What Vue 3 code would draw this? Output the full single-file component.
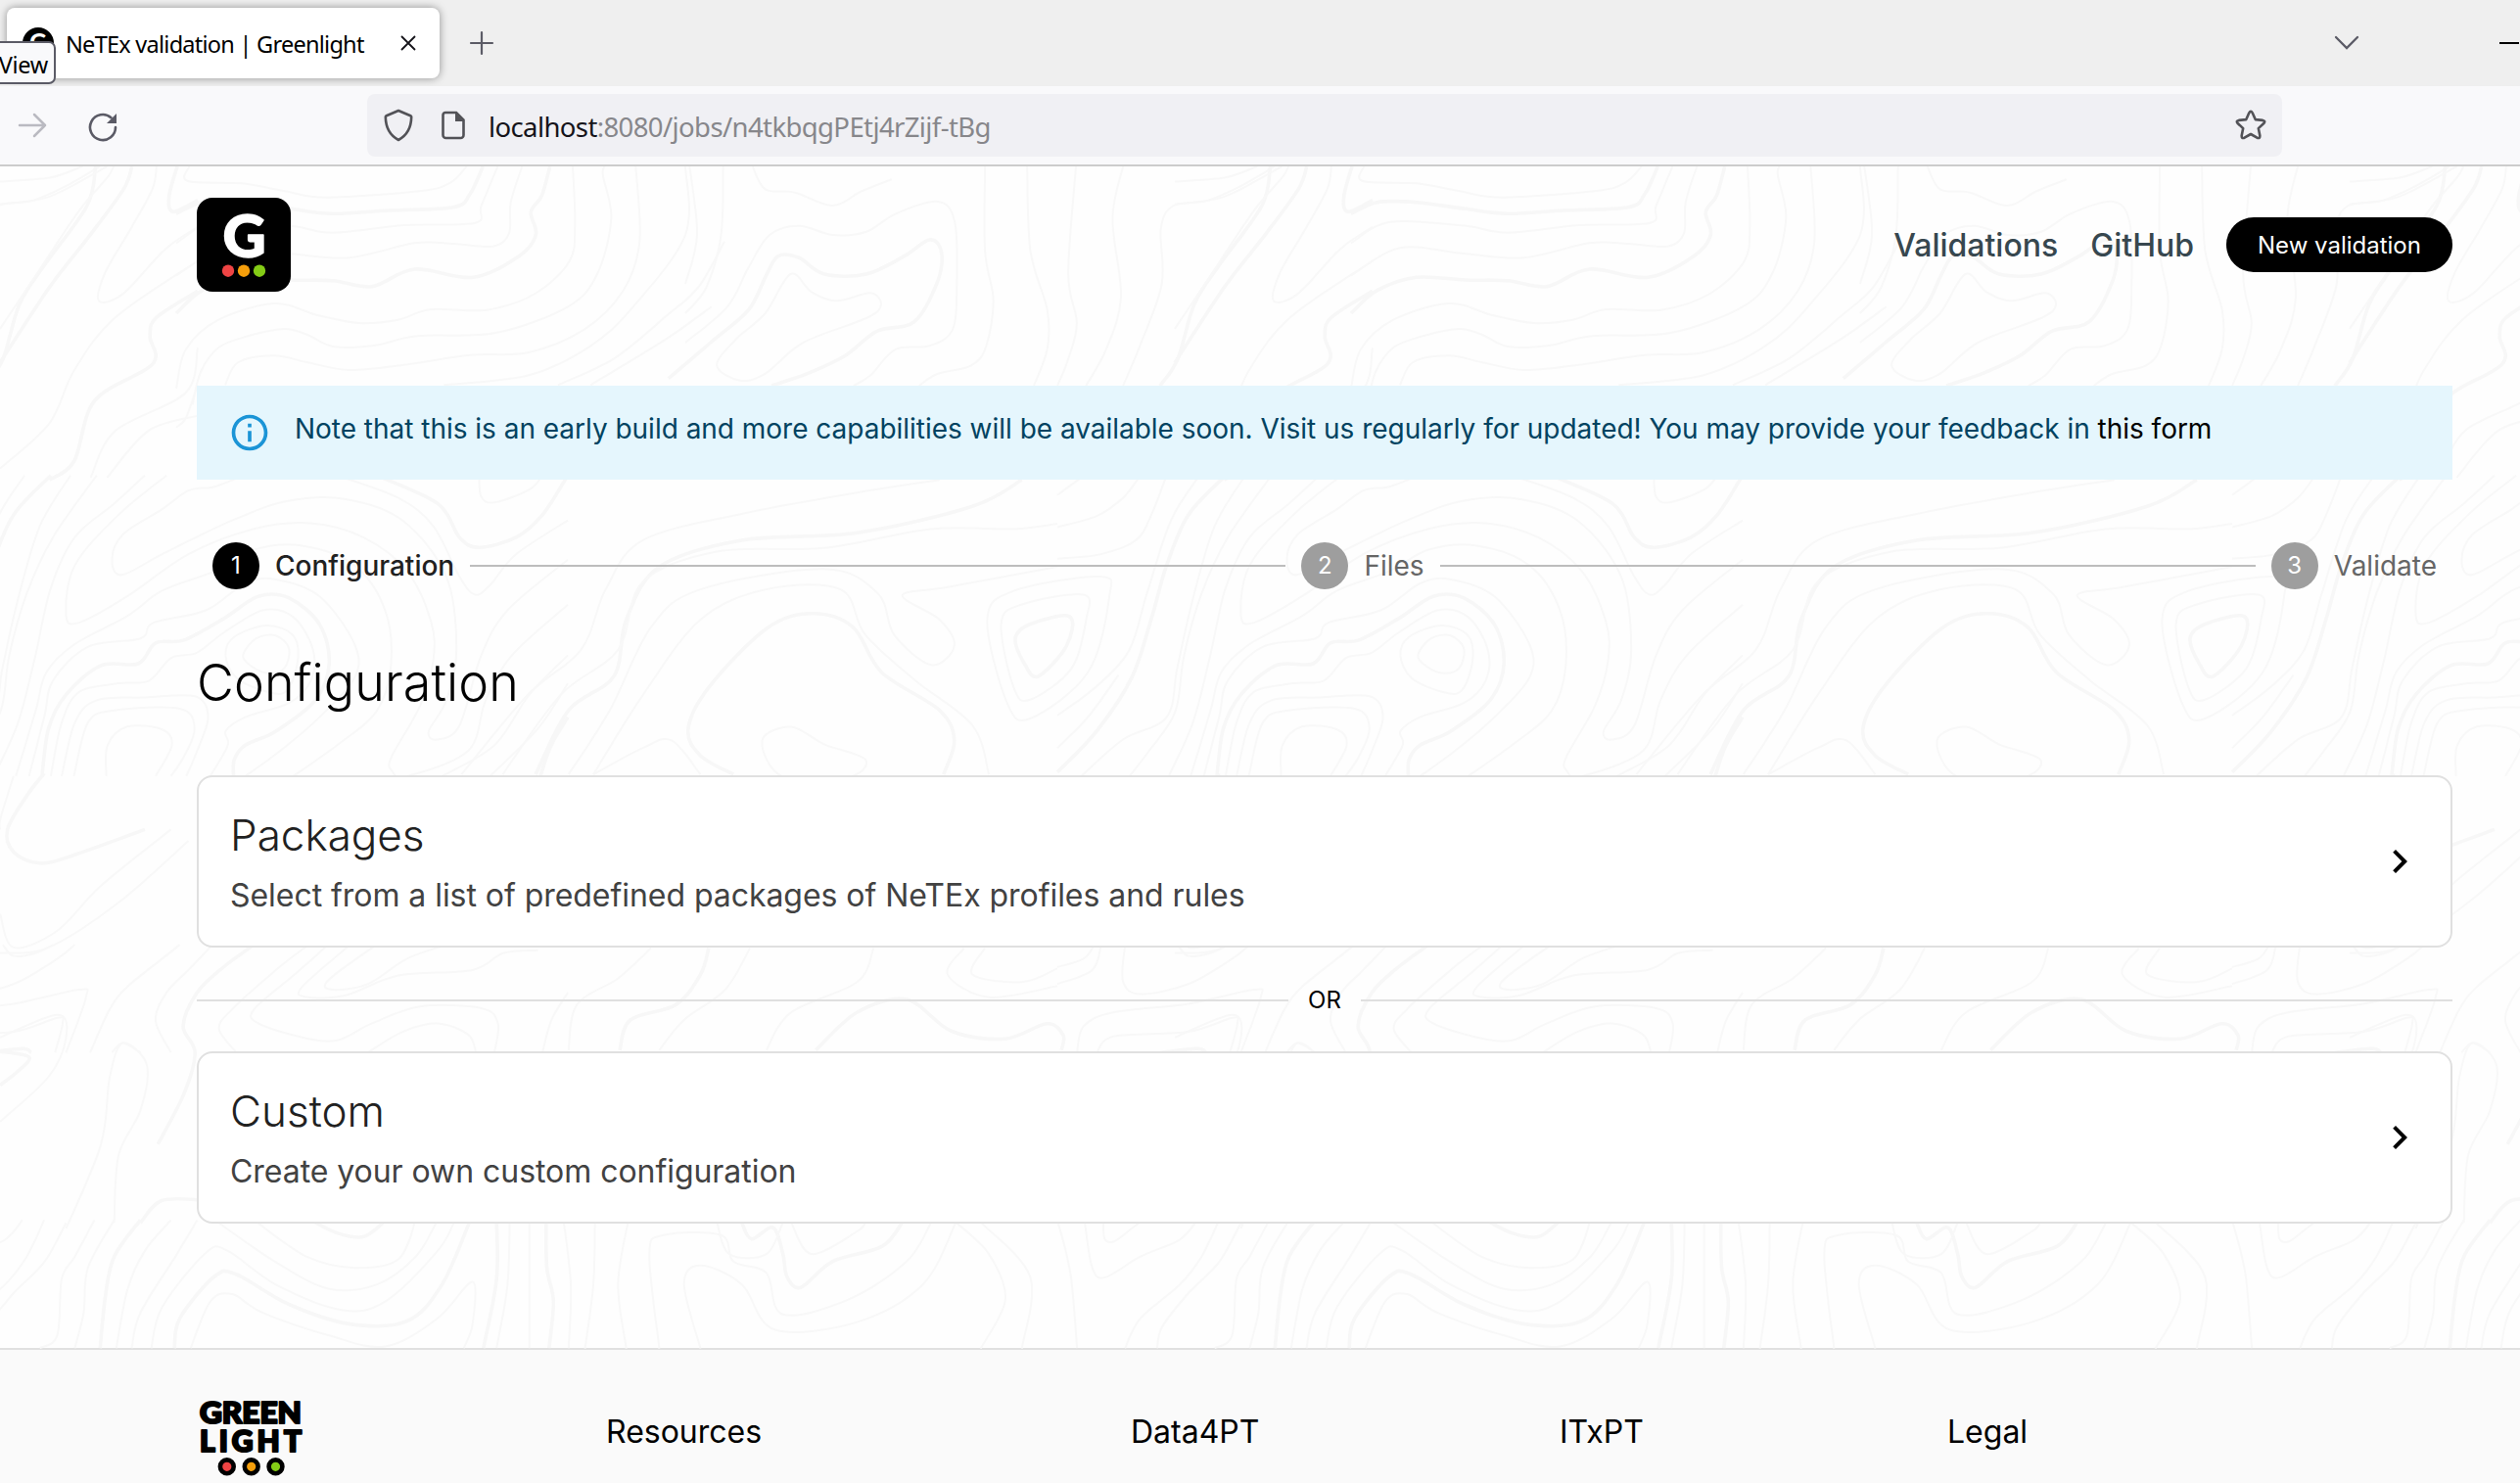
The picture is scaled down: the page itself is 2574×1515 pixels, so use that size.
<script setup>
// Contour sheets: each has an origin and scale, and polylines that are smoothed into curves.
// The leading digit is the kind: 0 plain, 1 bold index contour, 2 closed ring, 3 closed bold ring.
const sheets = [
  {
    ox: 0, oy: 0, sx: 1.188, sy: 1.296,
    lines: [
      [0, 0, 20, 60, 15, 100, 0],
      [0, 0, 50, 60, 40, 130, 0],
      [1, 0, 260, 60, 160, 110, 90, 150, 30, 160, 0],
      [0, 0, 215, 40, 150, 95, 60, 130, 15, 138, 0],
      [0, 240, 80, 200, 110, 150, 168, 120, 178, 128, 140, 160, 80, 185, 30, 190, 0],
      [0, 0, 400, 60, 340, 90, 270, 140, 200, 240, 125],
      [1, 240, 165, 190, 200, 182, 225, 185, 262, 115, 310, 90, 390, 60, 415],
      [0, 240, 330, 180, 350, 130, 412],
      [0, 240, 240, 225, 300, 140, 350, 110, 412],
      [1, 240, 45, 210, 60, 205, 40, 215, 0],
      [1, 650, 805, 690, 720, 745, 675, 760, 600, 800, 530, 900, 495, 1040, 485, 1180, 450, 1240, 415],
      [0, 560, 805, 640, 700, 705, 640, 735, 560, 780, 495, 900, 460, 1050, 430, 1140, 415],
      [0, 690, 805, 740, 720, 790, 610, 850, 560, 1000, 533, 1065, 565, 1085, 620, 1130, 660, 1158, 635, 1140, 600, 1095, 568, 1150, 557, 1283, 530],
      [0, 610, 805, 680, 700, 750, 640, 780, 550, 870, 510, 1000, 505, 1130, 480, 1230, 480, 1283, 473],
      [0, 720, 805, 780, 700, 850, 600, 930, 560, 1020, 560, 1050, 620, 1110, 680, 1180, 740, 1200, 805],
      [1, 890, 805, 850, 780, 835, 745, 860, 690, 930, 612, 985, 592, 1035, 610, 1070, 670, 1140, 720, 1158, 760, 1145, 805],
      [0, 720, 805, 780, 770, 815, 760, 850, 805],
      [2, 925, 760, 960, 742, 1000, 765, 1050, 785, 1030, 808, 950, 808],
      [3, 1232, 625, 1250, 606, 1298, 596, 1294, 635, 1260, 675, 1244, 660],
      [2, 1215, 605, 1240, 580, 1315, 567, 1318, 600, 1300, 665, 1250, 706, 1230, 690],
      [2, 1198, 600, 1230, 562, 1335, 543, 1346, 570, 1320, 670, 1250, 731, 1222, 710],
      [0, 690, 1170, 700, 1110, 750, 1075, 790, 1035],
      [1, 752, 1170, 765, 1130, 820, 1110, 850, 1070, 860, 1035],
      [0, 800, 1170, 830, 1130, 880, 1090, 910, 1035],
      [0, 930, 1170, 960, 1120, 1040, 1080, 1060, 1035],
      [1, 990, 1170, 1040, 1120, 1100, 1103, 1155, 1145, 1220, 1155, 1270, 1135, 1290, 1150, 1288, 1170],
      [0, 1170, 1035, 1150, 1070, 1200, 1100, 1283, 1085],
      [0, 1195, 1035, 1180, 1070, 1240, 1080, 1283, 1062],
      [0, 710, 1565, 720, 1480, 722, 1398],
      [0, 760, 1565, 750, 1480, 762, 1398],
      [0, 800, 1565, 788, 1440, 805, 1415, 875, 1415, 890, 1450, 930, 1465, 950, 1520, 1030, 1500, 1100, 1450, 1130, 1398],
      [0, 850, 1565, 830, 1480, 850, 1455, 900, 1480, 940, 1540, 1040, 1530, 1120, 1480, 1160, 1398],
      [1, 900, 1398, 912, 1420, 938, 1405, 950, 1440, 955, 1470, 972, 1484, 1010, 1450, 1070, 1430, 1095, 1398],
      [0, 870, 1398, 885, 1440, 930, 1440, 950, 1398],
      [0, 960, 1398, 985, 1440, 1040, 1410, 1050, 1398],
      [0, 1240, 1565, 1250, 1470, 1190, 1398],
      [0, 1190, 1565, 1220, 1500, 1200, 1440, 1160, 1398],
    ],
  },
  {
    ox: -120, oy: 310, sx: 2.24, sy: 1.742,
    lines: [
      [0, 0, 45, 70, 5],
      [0, 0, 102, 90, 82, 150, 50, 190, 10],
      [0, 0, 158, 100, 150, 180, 125, 215, 80, 250, 10],
      [0, 0, 437, 90, 385, 165, 320, 205, 220, 260, 90, 325, 10],
      [1, 0, 538, 90, 465, 170, 370, 215, 265, 250, 170, 300, 80, 385, 10],
      [0, 0, 495, 70, 440, 140, 365],
      [0, 55, 545, 150, 480, 250, 440, 275, 350, 310, 230, 360, 100, 430, 10],
      [0, 165, 545, 210, 500, 270, 430, 290, 330, 330, 220, 390, 120, 490, 10],
      [0, 255, 545, 310, 450, 350, 330, 385, 210, 440, 120, 530, 60, 600, 10],
      [0, 820, 12, 760, 30, 700, 37, 640, 70, 550, 115, 525, 160, 548, 187, 640, 150, 800, 90, 930, 55, 1060, 52, 1190, 90, 1290, 190, 1313, 320, 1290, 410, 1250, 465, 1268, 480, 1320, 455, 1370, 330, 1430, 250, 1568, 160],
      [0, 650, 10, 540, 80, 440, 170, 420, 258, 450, 272, 560, 225, 700, 150, 850, 105, 980, 95, 1100, 120, 1200, 180, 1255, 270, 1260, 340, 1230, 420, 1165, 510, 1165, 535, 1200, 545, 1340, 500, 1380, 410, 1440, 330, 1568, 240],
      [0, 305, 545, 350, 430, 375, 360, 440, 310, 560, 260, 640, 215, 760, 180, 850, 142, 960, 135, 1080, 170, 1150, 250, 1163, 350, 1130, 430, 1040, 490, 940, 545],
      [0, 335, 545, 370, 440, 390, 375, 470, 315, 590, 300, 620, 272, 740, 250, 830, 202, 900, 195, 1000, 225, 1080, 310, 1080, 370, 1000, 440, 910, 500, 830, 545],
      [1, 365, 545, 380, 460, 420, 400, 500, 348, 585, 345, 625, 308, 690, 303, 780, 265, 860, 225, 930, 228, 1000, 275, 1022, 345, 990, 410, 900, 465, 830, 490, 805, 515, 803, 545],
      [0, 385, 545, 410, 450, 450, 395, 540, 380, 610, 375, 660, 335, 720, 325, 780, 290, 870, 250, 940, 262, 985, 320, 980, 375, 930, 415, 830, 440, 785, 465, 790, 490, 750, 545],
      [2, 785, 330, 805, 297, 880, 277, 940, 295, 950, 340, 925, 393, 880, 395, 810, 370],
      [2, 825, 330, 855, 300, 900, 295, 930, 318, 920, 352, 885, 362, 845, 350],
      [0, 410, 545, 440, 450, 490, 410, 600, 405, 715, 403, 745, 440, 720, 500, 695, 545],
      [0, 438, 545, 470, 450, 530, 428, 680, 425, 714, 460, 690, 510, 660, 545],
      [0, 512, 545, 515, 490, 560, 457, 640, 462, 662, 490, 625, 545],
      [1, 1130, 10, 1270, 60, 1320, 120, 1365, 138, 1450, 120, 1510, 80, 1568, 10],
      [0, 1040, 10, 1180, 50, 1260, 100, 1320, 190, 1355, 222, 1390, 205, 1450, 150, 1568, 90],
      [0, 1365, 10, 1370, 48, 1400, 58, 1480, 35, 1510, 10],
      [1, 1505, 545, 1530, 490, 1568, 440],
      [0, 1280, 545, 1400, 490, 1480, 400, 1568, 330],
      [0, 1390, 545, 1500, 460, 1568, 380],
      [0, 0, 885, 60, 870, 85, 845],
      [0, 0, 915, 80, 890, 100, 845],
      [0, 155, 845, 150, 910, 190, 933, 300, 915, 400, 870, 440, 845],
      [0, 275, 845, 300, 865, 350, 860, 390, 845],
      [0, 45, 1037, 60, 990, 130, 965, 300, 950, 450, 925, 465, 940, 420, 1037],
      [0, 90, 1037, 130, 1008, 300, 1000, 400, 975, 412, 985, 395, 1037],
      [1, 235, 1037, 320, 1030, 340, 1037],
      [0, 475, 1037, 520, 960, 560, 920, 640, 870, 680, 845],
      [0, 525, 1037, 550, 1020, 590, 1037],
      [0, 660, 1037, 625, 980, 650, 930, 700, 890, 755, 845],
      [1, 630, 1200, 690, 1110, 715, 1037, 688, 990, 720, 930, 780, 885, 850, 845],
      [0, 810, 1037, 770, 995, 800, 960, 900, 890, 975, 845],
      [0, 1070, 845, 960, 920, 970, 938, 1060, 935, 1180, 900, 1350, 890, 1420, 860, 1500, 855],
      [0, 1130, 845, 1020, 908, 1030, 925, 1110, 915, 1200, 870, 1290, 845],
      [0, 1020, 845, 940, 900, 850, 960, 860, 985, 960, 1010, 1040, 1015, 1120, 985, 1230, 955, 1370, 958, 1408, 985, 1400, 1037],
      [0, 1110, 1037, 1190, 1000, 1270, 985, 1340, 1005, 1358, 1037],
      [0, 1510, 1037, 1530, 980, 1568, 930],
      // Left margin between the cards' rows
      [0, 300, 545, 270, 620, 269, 640],
      [1, 370, 540, 330, 580, 286, 640, 300, 680, 360, 700, 440, 685, 600, 640],
      [0, 269, 790, 300, 850, 400, 820, 500, 740, 660, 640],
      [0, 269, 860, 380, 850, 540, 770, 700, 660],
      [0, 269, 1010, 400, 970, 420, 1010, 380, 1080, 269, 1160],
      [1, 269, 1035, 335, 1045, 310, 1070, 269, 1095],
      [0, 420, 1350, 500, 1200, 520, 1080, 550, 1020, 605, 1060, 590, 1140, 540, 1220, 530, 1340],
      [1, 590, 1340, 640, 1300, 740, 1300],
      [0, 0, 1335, 30, 1430, 45, 1563],
      [0, 62, 1335, 80, 1420, 110, 1437, 190, 1400, 280, 1370, 320, 1335],
      [0, 105, 1335, 108, 1368, 130, 1373, 170, 1350, 195, 1335],
      [0, 155, 1563, 190, 1510, 280, 1450, 330, 1400, 370, 1335],
      [0, 228, 1563, 240, 1525, 300, 1465, 370, 1410, 420, 1340],
      [0, 360, 1563, 400, 1540, 410, 1440, 440, 1400, 485, 1335],
      [0, 440, 1563, 460, 1500, 470, 1420, 530, 1335],
      [1, 498, 1563, 510, 1470, 530, 1400, 590, 1335],
      [0, 535, 1563, 560, 1460, 600, 1390, 660, 1335],
      [0, 570, 1563, 590, 1500, 670, 1400, 720, 1335],
      [0, 615, 1563, 640, 1490, 740, 1393, 790, 1390, 900, 1450, 1050, 1495, 1150, 1480, 1270, 1390, 1310, 1335],
      [1, 668, 1563, 680, 1510, 760, 1435, 810, 1432, 930, 1485, 1070, 1520, 1200, 1515, 1280, 1450, 1345, 1335],
      [0, 705, 1563, 750, 1480, 800, 1467, 870, 1500, 1020, 1540, 1150, 1560, 1270, 1510, 1350, 1445, 1350, 1520, 1330, 1563],
      [0, 760, 1335, 900, 1410, 1020, 1457, 1130, 1450, 1220, 1400, 1270, 1335],
      [0, 850, 1335, 970, 1400, 1080, 1420, 1180, 1405, 1220, 1335],
      [1, 980, 1335, 1040, 1358, 1100, 1365, 1145, 1340],
      [1, 1405, 1335, 1405, 1440, 1375, 1563],
      [0, 1435, 1335, 1430, 1450, 1405, 1563],
      [0, 1480, 1335, 1480, 1563],
      [1, 1518, 1335, 1520, 1420, 1535, 1480, 1525, 1563],
      [0, 1558, 1335, 1575, 1450, 1570, 1563],
    ],
  },
  {
    ox: 180, oy: 10, sx: 3, sy: 3,
    lines: [
      [0, 40, -30, 35, 15, 200, 22, 330, 45, 460, 65, 750, 45, 840, 20, 890, -30],
      [1, 0, 115, 80, 80, 200, 80, 350, 100, 480, 115, 650, 105, 850, 95, 900, 55, 940, -30],
      [0, 0, 205, 120, 140, 350, 152, 480, 173, 700, 150, 915, 143, 935, 90, 985, -30],
      [0, 0, 305, 150, 220, 350, 238, 530, 250, 730, 205, 850, 207, 970, 215, 1020, 175, 1025, 80, 1060, -30],
      [1, 0, 420, 80, 350, 200, 310, 350, 318, 480, 320, 600, 338, 730, 285, 910, 310, 1050, 245, 1102, 180, 1087, 110, 1120, 60, 1145, -30],
      [0, 0, 650, 30, 530, 130, 440, 300, 390, 430, 425, 560, 450, 680, 440, 780, 408, 950, 410, 1100, 360, 1205, 260, 1222, 150, 1215, -30],
      [0, 50, 700, 75, 600, 130, 525, 220, 490, 330, 468, 400, 485, 480, 522, 600, 520, 740, 490, 980, 480, 1200, 400, 1290, 300, 1333, 130, 1308, 0, 1312, -30],
      [0, 150, 640, 190, 570, 300, 550, 400, 570, 530, 594, 700, 578, 900, 548, 1080, 540, 1250, 470, 1370, 350, 1420, 200, 1408, -30],
      [0, 820, 640, 1080, 610, 1270, 520, 1400, 400, 1560, 180, 1560, -30],
      [0, 1170, 640, 1340, 560, 1500, 430, 1600, 340, 1680, 200],
      [0, 1270, 640, 1500, 500, 1640, 400],
      [0, 0, 770, 30, 740, 65, 640],
    ],
  },
  {
    ox: 700, oy: 20, sx: 2.326, sy: 3,
    lines: [
      [2, 250, 270, 300, 325, 360, 352, 440, 328, 465, 365, 430, 405, 280, 480, 190, 575, 130, 596, 75, 550, 120, 470, 190, 390],
      [1, -40, 590, 60, 480, 150, 380, 190, 280, 220, 215, 270, 220, 330, 270, 430, 270, 520, 215, 580, 165, 608, 200, 600, 290, 545, 415, 455, 445, 380, 520, 290, 575, 205, 612],
      [0, 0, 480, 100, 370, 150, 250, 200, 150, 270, 122, 350, 150, 430, 140, 500, 85, 600, 48, 640, 110, 645, 300, 635, 440, 580, 490, 500, 500, 440, 580, 400, 612],
      [0, 90, -60, 85, 150, 50, 310, 0, 390],
      [0, 10, -60, 28, 150, 0, 300],
      [0, 160, -60, 190, 10, 260, 20, 350, 60, 420, 15, 490, -20],
      [0, 712, -60, 712, 200, 732, 350, 715, 490, 680, 550, 600, 575, 555, 612],
      [0, 812, -60, 820, 200, 860, 380, 860, 500, 828, 612],
      [0, 928, -60, 910, 270, 930, 420, 910, 530, 884, 612],
      [0, 1040, -60, 1015, 100, 1035, 340, 1000, 500, 952, 612],
      [0, 1400, -60, 1320, 0, 1240, 45, 1160, 60, 1130, 130, 1132, 300, 1080, 490, 1040, 612],
      [1, 1390, -60, 1370, 60, 1270, 240, 1210, 360, 1170, 530, 1128, 612],
    ],
  },
]

function smooth([kind, ...flat], { ox, oy, sx, sy }) {
  const pts = []
  for (let i = 0; i < flat.length; i += 2) pts.push([ox + flat[i] / sx, oy + flat[i + 1] / sy])
  const closed = kind >= 2
  const n = pts.length
  const at = (i) => (closed ? pts[(i + n) % n] : pts[Math.max(0, Math.min(n - 1, i))])
  let d = `M${pts[0][0].toFixed(1)} ${pts[0][1].toFixed(1)}`
  for (let i = 0; i < (closed ? n : n - 1); i++) {
    const [a, b, c, e] = [at(i - 1), at(i), at(i + 1), at(i + 2)]
    const v = [b[0] + (c[0] - a[0]) / 6, b[1] + (c[1] - a[1]) / 6, c[0] - (e[0] - b[0]) / 6, c[1] - (e[1] - b[1]) / 6, c[0], c[1]]
    d += 'C' + v.map((k) => k.toFixed(1)).join(' ')
  }
  return d
}

const contours = sheets.flatMap((s) => s.lines.map((l) => ({ d: smooth(l, s), bold: l[0] === 1 || l[0] === 3 })))

const links = ['Resources', 'Data4PT', 'ITxPT', 'Legal']
const choices = [
  { title: 'Packages', text: 'Select from a list of predefined packages of NeTEx profiles and rules' },
  { title: 'Custom', text: 'Create your own custom configuration' },
]
</script>

<template>
  <div class="window">
    <div class="tabs">
      <div class="tab">
        <span class="favicon"><b>G</b></span>
        <span class="tab-title">NeTEx validation | Greenlight</span>
        <svg class="close" viewBox="0 0 16 16"><path d="M1 1l14 14M15 1L1 15" /></svg>
      </div>
      <svg class="plus" viewBox="0 0 24 24"><path d="M12 1v22M1 12h22" /></svg>
      <span class="grow"></span>
      <svg class="list" viewBox="0 0 24 14"><path d="M1 1l11 11L23 1" /></svg>
      <span class="minimize"></span>
    </div>
    <div class="hint">View</div>
    <div class="toolbar">
      <svg class="forward" viewBox="0 0 28 26"><path d="M1 13h26M16 2l11 11-11 11" /></svg>
      <svg class="reload" viewBox="0 0 30 30"><path class="line" d="M28 15a13 13 0 1 1-4.500-9.800" /><path class="solid" d="M29 1v10H19z" /></svg>
      <div class="address">
        <svg class="shield" viewBox="0 0 30 34"><path d="M15 2l12.300 5.200q.900.400.900 1.400C28 19 24.500 27 15 32 5.500 27 2 19 1.800 8.600q0-1 .9-1.400z" /></svg>
        <svg class="page-icon" viewBox="0 0 24 30"><path class="line" d="M4 2h11l7.500 7.500V25a3 3 0 0 1-3 3H4.500a3 3 0 0 1-3-3V4.500A2.500 2.500 0 0 1 4 2z" /><path class="solid" d="M14 2v9h8.500z" /></svg>
        <span class="url"><i>localhost</i>:8080/jobs/n4tkbqgPEtj4rZijf-tBg</span>
        <svg class="star" viewBox="0 0 32 32"><path d="M14.300 3.300q1.700-3 3.400 0l3 6.800 7.500.800q3.300.700 1.100 3.100l-5.500 5.100 1.500 7.500q.200 3.400-2.900 2.100L16 25l-6.400 3.700q-3.100 1.300-2.900-2.100l1.500-7.500-5.500-5.100q-2.200-2.400 1.100-3.100l7.500-.800z" /></svg>
      </div>
    </div>

    <main class="page">
      <svg class="topography" viewBox="0 0 2574 1208">
        <defs>
          <g id="contours">
            <path v-for="(c, i) in contours" :key="i" :d="c.d" :class="{ bold: c.bold }" />
          </g>
        </defs>
        <use v-for="k in 4" :key="k" href="#contours" :x="(k - 2) * 1200" />
      </svg>

      <div class="content">
        <header class="head">
          <svg class="logo" viewBox="0 0 96 96">
            <rect width="96" height="96" rx="16" />
            <text x="48.500" y="60.500" text-anchor="middle">G</text>
            <circle cx="32" cy="74.700" r="6.200" fill="#ef4444" />
            <circle cx="48" cy="74.700" r="6.200" fill="#f59e0b" />
            <circle cx="64" cy="74.700" r="6.200" fill="#84cc16" />
          </svg>
          <nav class="nav">
            <a>Validations</a>
            <a>GitHub</a>
            <button>New validation</button>
          </nav>
        </header>

        <div class="alert">
          <svg viewBox="0 0 24 24"><path d="M11 7h2v2h-2zm0 4h2v6h-2zm1-9C6.480 2 2 6.480 2 12s4.480 10 10 10 10-4.480 10-10S17.520 2 12 2zm0 18c-4.410 0-8-3.590-8-8s3.590-8 8-8 8 3.590 8 8-3.590 8-8 8z" /></svg>
          <p>Note that this is an early build and more capabilities will be available soon. Visit us regularly for updated! You may provide your feedback in <a>this form</a></p>
        </div>

        <div class="stepper">
          <div class="step active"><span class="dot">1</span><span class="label">Configuration</span></div>
          <span class="rail"></span>
          <div class="step"><span class="dot">2</span><span class="label">Files</span></div>
          <span class="rail"></span>
          <div class="step"><span class="dot">3</span><span class="label">Validate</span></div>
        </div>

        <h1>Configuration</h1>

        <template v-for="(c, i) in choices" :key="c.title">
          <div v-if="i" class="divider"><span>OR</span></div>
          <div class="card">
            <div class="card-body">
              <h2>{{ c.title }}</h2>
              <p>{{ c.text }}</p>
            </div>
            <svg viewBox="0 0 24 24"><path d="M10 6 8.590 7.410 13.170 12l-4.580 4.590L10 18l6-6z" /></svg>
          </div>
        </template>
      </div>
    </main>

    <footer class="footer">
      <svg class="wordmark" viewBox="0 0 110 80">
        <text x="3" y="23.500" textLength="104" lengthAdjust="spacingAndGlyphs">GREEN</text>
        <text x="3" y="52.800" textLength="104" lengthAdjust="spacing">LIGHT</text>
        <g stroke="#000" stroke-width="4.600">
          <circle cx="30.800" cy="68.300" r="6.900" fill="#ef4444" />
          <circle cx="55.700" cy="68.300" r="6.900" fill="#f59e0b" />
          <circle cx="80.500" cy="68.300" r="6.900" fill="#84cc16" />
        </g>
      </svg>
      <span v-for="l in links" :key="l">{{ l }}</span>
    </footer>
  </div>
</template>

<style>
body {
  overflow: hidden;
}
</style>

<style scoped>
* {
  box-sizing: border-box;
  margin: 0;
}
.window {
  position: relative;
  width: 2574px;
  height: 1515px;
  display: flex;
  flex-direction: column;
  overflow: hidden;
  background: #fefefe;
  font-family: Inter, sans-serif;
  color: #000;
}
svg {
  display: block;
  flex: none;
  overflow: visible;
}
.grow {
  flex: 1;
}
.tabs {
  height: 88px;
  flex: none;
  display: flex;
  align-items: center;
  background: #efefef;
  padding-left: 7px;
  font-family: "Noto Sans", sans-serif;
}
.tab {
  width: 442px;
  height: 72px;
  border-radius: 8px;
  background: #fff;
  box-shadow: 0 0 8px rgba(0, 0, 0, 0.4);
  display: flex;
  align-items: center;
  padding: 0 24px 0 16px;
}
.favicon {
  width: 32px;
  height: 32px;
  border-radius: 50%;
  background: #000;
  color: #fff;
  font: 900 24px/29px Lato, sans-serif;
  text-align: center;
}
.tab-title {
  margin-left: 12px;
  padding-top: 1px;
  font-size: 23.5px;
  letter-spacing: -0.74px;
  white-space: nowrap;
  flex: 1;
}
.close {
  width: 16px;
  height: 16px;
  fill: none;
  stroke: #15141a;
  stroke-width: 1.8;
}
.plus {
  width: 24px;
  height: 24px;
  margin-left: 31px;
  fill: none;
  stroke: #5b5b66;
  stroke-width: 2.2;
  stroke-linecap: round;
}
.list {
  width: 24px;
  height: 14px;
  margin-right: 144px;
  fill: none;
  stroke: #5b5b66;
  stroke-width: 2.3;
  stroke-linecap: round;
}
.minimize {
  width: 20px;
  height: 2px;
  margin-right: 1px;
  background: #000;
}
.hint {
  position: absolute;
  left: -20px;
  top: 42px;
  width: 77px;
  height: 44px;
  border: 2px solid #5b5b66;
  border-radius: 7px;
  background: #f9f9fb;
  padding-right: 6px;
  text-align: right;
  font: 23.5px/44px "Noto Sans", sans-serif;
  letter-spacing: -0.3px;
}
.toolbar {
  height: 82px;
  flex: none;
  display: flex;
  align-items: center;
  background: #f9f9fb;
  border-bottom: 2px solid #ccc;
  padding-left: 19px;
}
.forward {
  width: 28px;
  height: 26px;
  fill: none;
  stroke: #babac1;
  stroke-width: 2.5;
  stroke-linecap: round;
  stroke-linejoin: round;
}
.reload {
  width: 30px;
  height: 30px;
  margin: 3px 0 0 43px;
}
.reload .line,
.page-icon .line {
  fill: none;
  stroke: #5b5b66;
  stroke-width: 2.6;
  stroke-linecap: round;
}
.reload .solid {
  fill: #5b5b66;
}
.address {
  width: 1956px;
  height: 64px;
  margin-left: 255px;
  border-radius: 8px;
  background: #f0f0f4;
  display: flex;
  align-items: center;
  padding: 0 16px 0 17px;
}
.shield,
.star {
  fill: none;
  stroke: #525257;
  stroke-width: 2.6;
  stroke-linejoin: round;
}
.shield {
  width: 30px;
  height: 34px;
}
.page-icon {
  width: 24px;
  height: 30px;
  margin-left: 29px;
}
.page-icon .line {
  stroke: #525257;
}
.page-icon .solid {
  fill: #525257;
}
.url {
  flex: 1;
  margin-left: 24px;
  padding-top: 2px;
  font: 27.5px "Noto Sans", sans-serif;
  letter-spacing: -0.61px;
  color: #87878b;
}
.url i {
  font-style: normal;
  color: #15141a;
}
.star {
  width: 32px;
  height: 32px;
}
.page {
  position: relative;
  height: 1207px;
  flex: none;
}
.topography {
  position: absolute;
  left: 0;
  top: 0;
  width: 2574px;
  height: 1208px;
  overflow: hidden;
}
.topography path {
  fill: none;
  stroke: #f8f8f8;
  stroke-width: 2;
}
.topography .bold {
  stroke: #f7f7f7;
  stroke-width: 3.6;
}
.content {
  position: relative;
  width: 2304px;
  margin-left: 201px;
  display: flex;
  flex-direction: column;
}
.head {
  height: 96px;
  margin-top: 32px;
  display: flex;
  align-items: center;
  justify-content: space-between;
}
.logo {
  width: 96px;
  height: 96px;
}
.logo text {
  font: 900 61px Lato, sans-serif;
  fill: #fff;
  stroke: #fff;
  stroke-width: 1.5;
  stroke-linejoin: round;
}
.nav {
  display: flex;
  align-items: center;
}
.nav a {
  margin-right: 33px;
  font-size: 32px;
  font-weight: 500;
  color: #37474f;
}
.nav button {
  width: 231px;
  height: 56px;
  border: 0;
  border-radius: 28px;
  background: #000;
  color: #fff;
  font: 400 24px Inter, sans-serif;
  padding: 0;
}
.alert {
  height: 96px;
  margin-top: 96px;
  display: flex;
  background: #e5f6fd;
  padding: 26px 32px;
}
.alert svg {
  width: 44px;
  height: 44px;
  fill: #1b94d6;
}
.alert p {
  margin: -2px 0 0 24px;
  font-size: 28px;
  line-height: 40px;
  letter-spacing: -0.02px;
  color: #014361;
  white-space: nowrap;
}
.alert a {
  color: #000;
}
.stepper {
  height: 48px;
  margin-top: 64px;
  padding: 0 16px;
  display: flex;
  align-items: center;
}
.step {
  display: flex;
  align-items: center;
  color: #666;
}
.dot {
  width: 48px;
  height: 48px;
  border-radius: 50%;
  background: #9e9e9e;
  color: #fff;
  font-size: 24px;
  line-height: 48px;
  text-align: center;
}
.label {
  margin-left: 16px;
  font-size: 28px;
}
.active .dot {
  background: #000;
}
.active .label {
  font-weight: 500;
  color: #212121;
}
.rail {
  flex: 1;
  height: 2px;
  margin: 0 16px;
  background: #bdbdbd;
}
h1 {
  margin-top: 64px;
  height: 64px;
  font-size: 52px;
  line-height: 64px;
  letter-spacing: 0.1px;
  font-weight: 300;
}
.card {
  height: 176px;
  border: 2px solid #e0e0e0;
  border-radius: 16px;
  background: #fff;
  display: flex;
  align-items: center;
  justify-content: space-between;
  padding: 0 28px 0 32px;
}
h1 + .card {
  margin-top: 62px;
}
.card-body {
  padding-top: 9px;
}
h2 {
  font-size: 44px;
  line-height: 60px;
  font-weight: 300;
  color: #212121;
}
.card p {
  font-size: 32px;
  line-height: 64px;
  letter-spacing: -0.05px;
  color: #424242;
}
.card svg {
  width: 48px;
  height: 48px;
}
.divider {
  height: 106px;
  padding-top: 1px;
  display: flex;
  align-items: center;
  font-size: 24px;
}
.divider::before,
.divider::after {
  content: "";
  flex: 1;
  height: 2px;
  background: #e0e0e0;
}
.divider span {
  margin: 0 20px;
}
.footer {
  flex: 1;
  border-top: 2px solid #e0e0e0;
  background: #fafafa;
  display: grid;
  grid-template-columns: 418px 536px 438px 396px auto;
  padding: 51px 0 0 201px;
  font-size: 32px;
  line-height: 66px;
}
.wordmark {
  width: 110px;
  height: 80px;
}
.wordmark text {
  font: 900 30px/30px Lato, sans-serif;
  stroke: #000;
  stroke-width: 2.2;
  stroke-linejoin: round;
}
</style>
